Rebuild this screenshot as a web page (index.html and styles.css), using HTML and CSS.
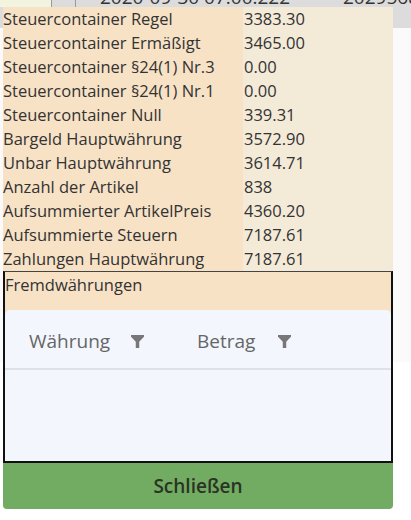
FILE: index.html
```html
<!DOCTYPE html>
<html lang="de">
<head>
<meta charset="utf-8">
<link rel="stylesheet" href="styles.css">
</head>
<body>
<div class="backdrop">
  <div class="bg-row">
    <div class="bg-cell c1"></div>
    <div class="bg-cell c2"></div>
    <div class="bg-cell c3"><span class="bg-text">2020-09-30 07:00:222</span></div>
    <div class="bg-cell c4"><span class="bg-text">2029568</span></div>
  </div>
  <div class="bg-rest"></div>
</div>

<div class="panel">
  <div class="rows">
    <div class="row"><span class="lbl">Steuercontainer Regel</span><span class="val">3383.30</span></div>
    <div class="row"><span class="lbl">Steuercontainer Ermäßigt</span><span class="val">3465.00</span></div>
    <div class="row"><span class="lbl">Steuercontainer §24(1) Nr.3</span><span class="val">0.00</span></div>
    <div class="row"><span class="lbl">Steuercontainer §24(1) Nr.1</span><span class="val">0.00</span></div>
    <div class="row"><span class="lbl">Steuercontainer Null</span><span class="val">339.31</span></div>
    <div class="row"><span class="lbl">Bargeld Hauptwährung</span><span class="val">3572.90</span></div>
    <div class="row"><span class="lbl">Unbar Hauptwährung</span><span class="val">3614.71</span></div>
    <div class="row"><span class="lbl">Anzahl der Artikel</span><span class="val">838</span></div>
    <div class="row"><span class="lbl">Aufsummierter ArtikelPreis</span><span class="val">4360.20</span></div>
    <div class="row"><span class="lbl">Aufsummierte Steuern</span><span class="val">7187.61</span></div>
    <div class="row"><span class="lbl">Zahlungen Hauptwährung</span><span class="val">7187.61</span></div>
  </div>
  <div class="fremd">
    <div class="fremd-title">Fremdwährungen</div>
    <div class="card">
      <div class="thead">
        <div class="th th1">Währung
          <svg class="filter" viewBox="0 0 12 12" width="13" height="13"><path d="M0 0h12v1.6L7.6 6.2V12H4.4V6.2L0 1.6z" fill="#777"/></svg>
        </div>
        <div class="th th2">Betrag
          <svg class="filter" viewBox="0 0 12 12" width="13" height="13"><path d="M0 0h12v1.6L7.6 6.2V12H4.4V6.2L0 1.6z" fill="#777"/></svg>
        </div>
      </div>
      <div class="tbody"></div>
    </div>
  </div>
  <button class="close">Schließen</button>
</div>
</body>
</html>
```

FILE: styles.css
```css
html, body {
  margin: 0;
  padding: 0;
}
body {
  width: 411px;
  height: 520px;
  overflow: hidden;
  position: relative;
  background: #ffffff;
  font-family: "Open Sans", "Noto Sans", sans-serif;
}
.backdrop {
  display: flex;
  flex-direction: column;
}
.bg-row {
  display: flex;
  height: 28px;
  background: #dcdcdc;
}
.bg-cell {
  height: 7px;
  box-sizing: border-box;
  overflow: hidden;
}
.bg-text {
  display: block;
  margin-top: -12px;
  font-size: 19px;
  line-height: 19px;
  color: #333;
  white-space: nowrap;
}
.c1 {
  width: 52px;
  background: #f3f4e0;
  border-right: 1px solid #9a9a9a;
}
.c2 {
  width: 24px;
  border-right: 1px solid #9a9a9a;
}
.c3 {
  width: 250px;
  padding-left: 24px;
}
.c4 {
  flex: 1;
  padding-left: 17px;
}
.bg-rest {
  height: 334px;
  background: #fafafa;
}
.panel {
  position: absolute;
  left: 3px;
  top: 7px;
  width: 390px;
  display: flex;
  flex-direction: column;
}
.rows {
  display: flex;
  flex-direction: column;
}
.row {
  display: flex;
  height: 24px;
  font-size: 16.5px;
  color: #333;
}
.lbl {
  width: 240px;
  line-height: 24px;
  background: #f7e2c6;
  white-space: nowrap;
}
.val {
  flex: 1;
  line-height: 24px;
  padding-left: 1px;
  background: #f4ead8;
}
.fremd {
  height: 192px;
  box-sizing: border-box;
  background: #f7e2c6;
  border: 2px solid #111;
  border-top: 1px solid #444;
  display: flex;
  flex-direction: column;
}
.fremd-title {
  height: 38px;
  font-size: 16.5px;
  line-height: 26px;
  color: #333;
}
.card {
  flex: 1;
  background: #f3f7fd;
  border-radius: 5px 5px 0 0;
  display: flex;
  flex-direction: column;
}
.thead {
  height: 60px;
  box-sizing: border-box;
  border-bottom: 2px solid #dde1e8;
  display: flex;
  align-items: center;
  padding-top: 4px;
  font-size: 19px;
  color: #666;
}
.th {
  display: flex;
  align-items: center;
}
.th1 {
  width: 168px;
  padding-left: 24px;
}
.th1 .filter {
  margin-left: 21px;
}
.th2 .filter {
  margin-left: 23px;
}
.tbody {
  flex: 1;
}
.close {
  height: 46px;
  border: none;
  background: #72ab62;
  border-radius: 0 0 4px 4px;
  font-family: "Open Sans", "Noto Sans", sans-serif;
  font-size: 19px;
  font-weight: 600;
  color: #2a3324;
  padding: 0;
}
```
